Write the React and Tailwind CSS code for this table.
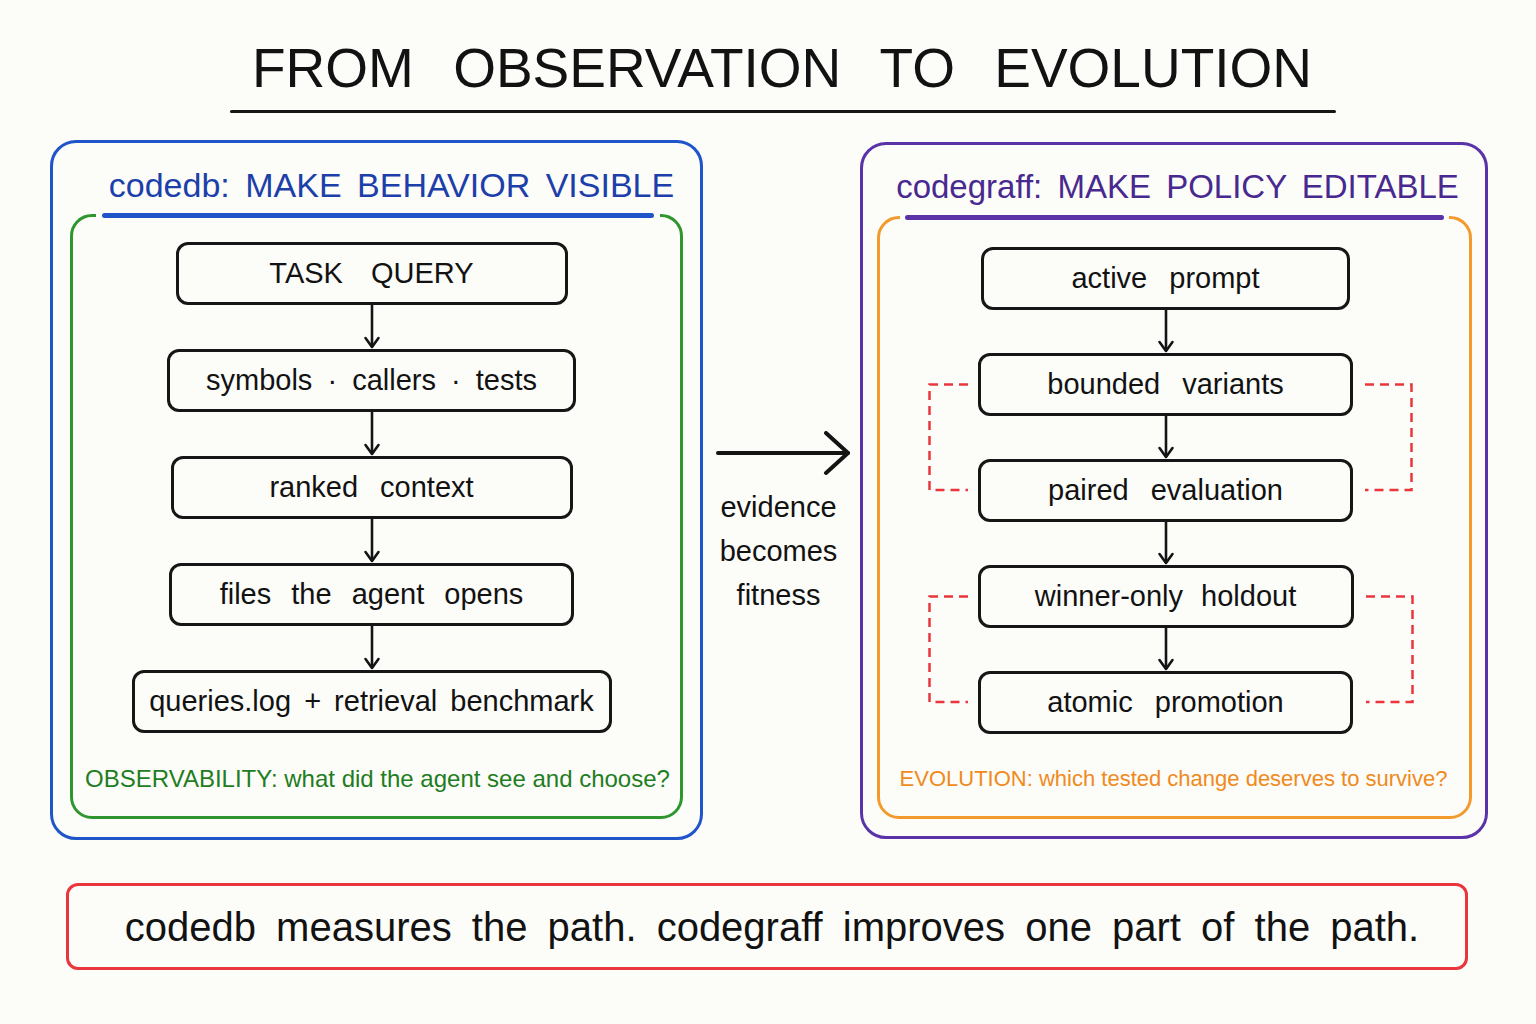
import React from "react";

const Arrow = ({ h = 44 }) => (
  <svg width="20" height={h} viewBox={`0 0 20 ${h}`} className="block">
    <path d={`M10 0 V${h - 2}`} stroke="#141414" strokeWidth="2.6" fill="none" />
    <path
      d={`M3.5 ${h - 11} L10 ${h - 2} L16.5 ${h - 11}`}
      stroke="#141414"
      strokeWidth="2.6"
      fill="none"
      strokeLinecap="round"
      strokeLinejoin="round"
    />
  </svg>
);

const FlowBox = ({ className, children }) => (
  <div
    className={
      "h-[63px] shrink-0 border-[3px] border-[#161616] rounded-[12px] flex items-center justify-center text-[29px] leading-none whitespace-nowrap text-[#121212] " +
      className
    }
  >
    {children}
  </div>
);

const LeftBracket = () => (
  <svg
    className="absolute left-[-50px] top-[30px]"
    width="42"
    height="109"
    viewBox="0 0 42 109"
  >
    <path
      d="M40 1.5 H1.5 V107 H40"
      stroke="#e8363c"
      strokeWidth="2.5"
      strokeDasharray="9 6"
      fill="none"
    />
  </svg>
);

const RightBracket = () => (
  <svg
    className="absolute right-[-60px] top-[30px]"
    width="48"
    height="109"
    viewBox="0 0 48 109"
  >
    <path
      d="M0 1.5 H46.5 V107 H0"
      stroke="#e8363c"
      strokeWidth="2.5"
      strokeDasharray="9 6"
      fill="none"
    />
  </svg>
);

export default function App() {
  return (
    <div className="w-[1536px] h-[1024px] bg-[#fcfcf9] overflow-hidden font-['Liberation_Sans',Arial,sans-serif] text-[#111]">
      {/* Title */}
      <div className="pt-[41px] pl-[28px] flex justify-center">
        <h1 className="text-[55px] leading-[55px] font-normal whitespace-nowrap [word-spacing:24px] text-[#121212]">
          FROM OBSERVATION TO EVOLUTION
        </h1>
      </div>
      <div className="ml-[230px] mt-[14px] w-[1106px] h-[3px] rounded-full bg-[#161616]" />

      {/* Main row */}
      <div className="mt-[27px] pl-[50px] flex items-start">
        {/* Left panel */}
        <div className="w-[653px] h-[700px] border-[3px] border-[#1f55c9] rounded-[26px] px-[17px] pb-[18px] flex flex-col">
          <div className="h-[71px] pt-[12px] pl-[30px] flex items-center justify-center shrink-0">
            <span className="text-[34px] leading-none whitespace-nowrap text-[#1c3faa] [word-spacing:6px]">
              codedb: MAKE BEHAVIOR VISIBLE
            </span>
          </div>
          <div className="relative flex-1 border-[3px] border-[#2f962f] rounded-[22px] pt-[25px] pr-[10px] flex flex-col items-center">
            <div className="absolute top-[-4px] left-[23px] right-[20px] h-[5px] bg-[#fcfcf9] px-[6px]">
              <div className="h-full rounded-full bg-[#1f55c9]" />
            </div>
            <FlowBox className="w-[392px] [word-spacing:20px]">TASK QUERY</FlowBox>
            <Arrow />
            <FlowBox className="w-[409px] [word-spacing:7px]">symbols · callers · tests</FlowBox>
            <Arrow />
            <FlowBox className="w-[402px] [word-spacing:14px]">ranked context</FlowBox>
            <Arrow />
            <FlowBox className="w-[405px] [word-spacing:12px]">files the agent opens</FlowBox>
            <Arrow />
            <FlowBox className="w-[480px] [word-spacing:5px]">
              queries.log + retrieval benchmark
            </FlowBox>
            <div className="mt-[26px] h-[40px] flex items-center pl-[12px] text-[24px] leading-none whitespace-nowrap text-[#1f7d22]">
              OBSERVABILITY: what did the agent see and choose?
            </div>
          </div>
        </div>

        {/* Middle */}
        <div className="w-[157px] pt-[291px] flex flex-col items-center">
          <svg width="136" height="46" viewBox="0 0 136 46" className="block ml-[4px]">
            <path d="M2 22 H132" stroke="#141414" strokeWidth="4" strokeLinecap="round" fill="none" />
            <path
              d="M110 2 L132 22 L110 42"
              stroke="#141414"
              strokeWidth="4"
              strokeLinecap="round"
              strokeLinejoin="round"
              fill="none"
            />
          </svg>
          <div className="mt-[8px] text-[29px] leading-[44px] text-center text-[#121212] -ml-[6px]">
            <div>evidence</div>
            <div>becomes</div>
            <div>fitness</div>
          </div>
        </div>

        {/* Right panel */}
        <div className="mt-[2px] w-[628px] h-[697px] border-[3px] border-[#5a33a9] rounded-[26px] pl-[14px] pr-[13px] pb-[17px] flex flex-col">
          <div className="h-[71px] pt-[12px] pl-[6px] flex items-center justify-center shrink-0">
            <span className="text-[33px] leading-none whitespace-nowrap text-[#48298f] [word-spacing:6px]">
              codegraff: MAKE POLICY EDITABLE
            </span>
          </div>
          <div className="relative flex-1 border-[3px] border-[#f39a2c] rounded-[22px] pt-[28px] pr-[18px] flex flex-col items-center">
            <div className="absolute top-[-4px] left-[20px] right-[20px] h-[5px] bg-[#fcfcf9] px-[5px]">
              <div className="h-full rounded-full bg-[#5a33a9]" />
            </div>
            <FlowBox className="w-[369px] [word-spacing:14px]">active prompt</FlowBox>
            <Arrow h={43} />
            <div className="relative flex flex-col items-center">
              <FlowBox className="w-[375px] [word-spacing:14px]">bounded variants</FlowBox>
              <Arrow h={43} />
              <FlowBox className="w-[375px] [word-spacing:14px]">paired evaluation</FlowBox>
              <LeftBracket />
              <RightBracket />
            </div>
            <Arrow h={43} />
            <div className="relative flex flex-col items-center">
              <FlowBox className="w-[376px] [word-spacing:10px]">winner-only holdout</FlowBox>
              <Arrow h={43} />
              <FlowBox className="w-[375px] [word-spacing:14px]">atomic promotion</FlowBox>
              <LeftBracket />
              <RightBracket />
            </div>
            <div className="mt-[25px] h-[40px] flex items-center pl-[16px] text-[22px] leading-none whitespace-nowrap text-[#f08a1c]">
              EVOLUTION: which tested change deserves to survive?
            </div>
          </div>
        </div>
      </div>

      {/* Bottom summary */}
      <div className="mt-[43px] ml-[66px] w-[1402px] h-[87px] border-[3px] border-[#e8363c] rounded-[12px] flex items-center justify-center">
        <span className="text-[40px] leading-none whitespace-nowrap text-[#121212] [word-spacing:9px] pl-[10px]">
          codedb measures the path. codegraff improves one part of the path.
        </span>
      </div>
    </div>
  );
}
